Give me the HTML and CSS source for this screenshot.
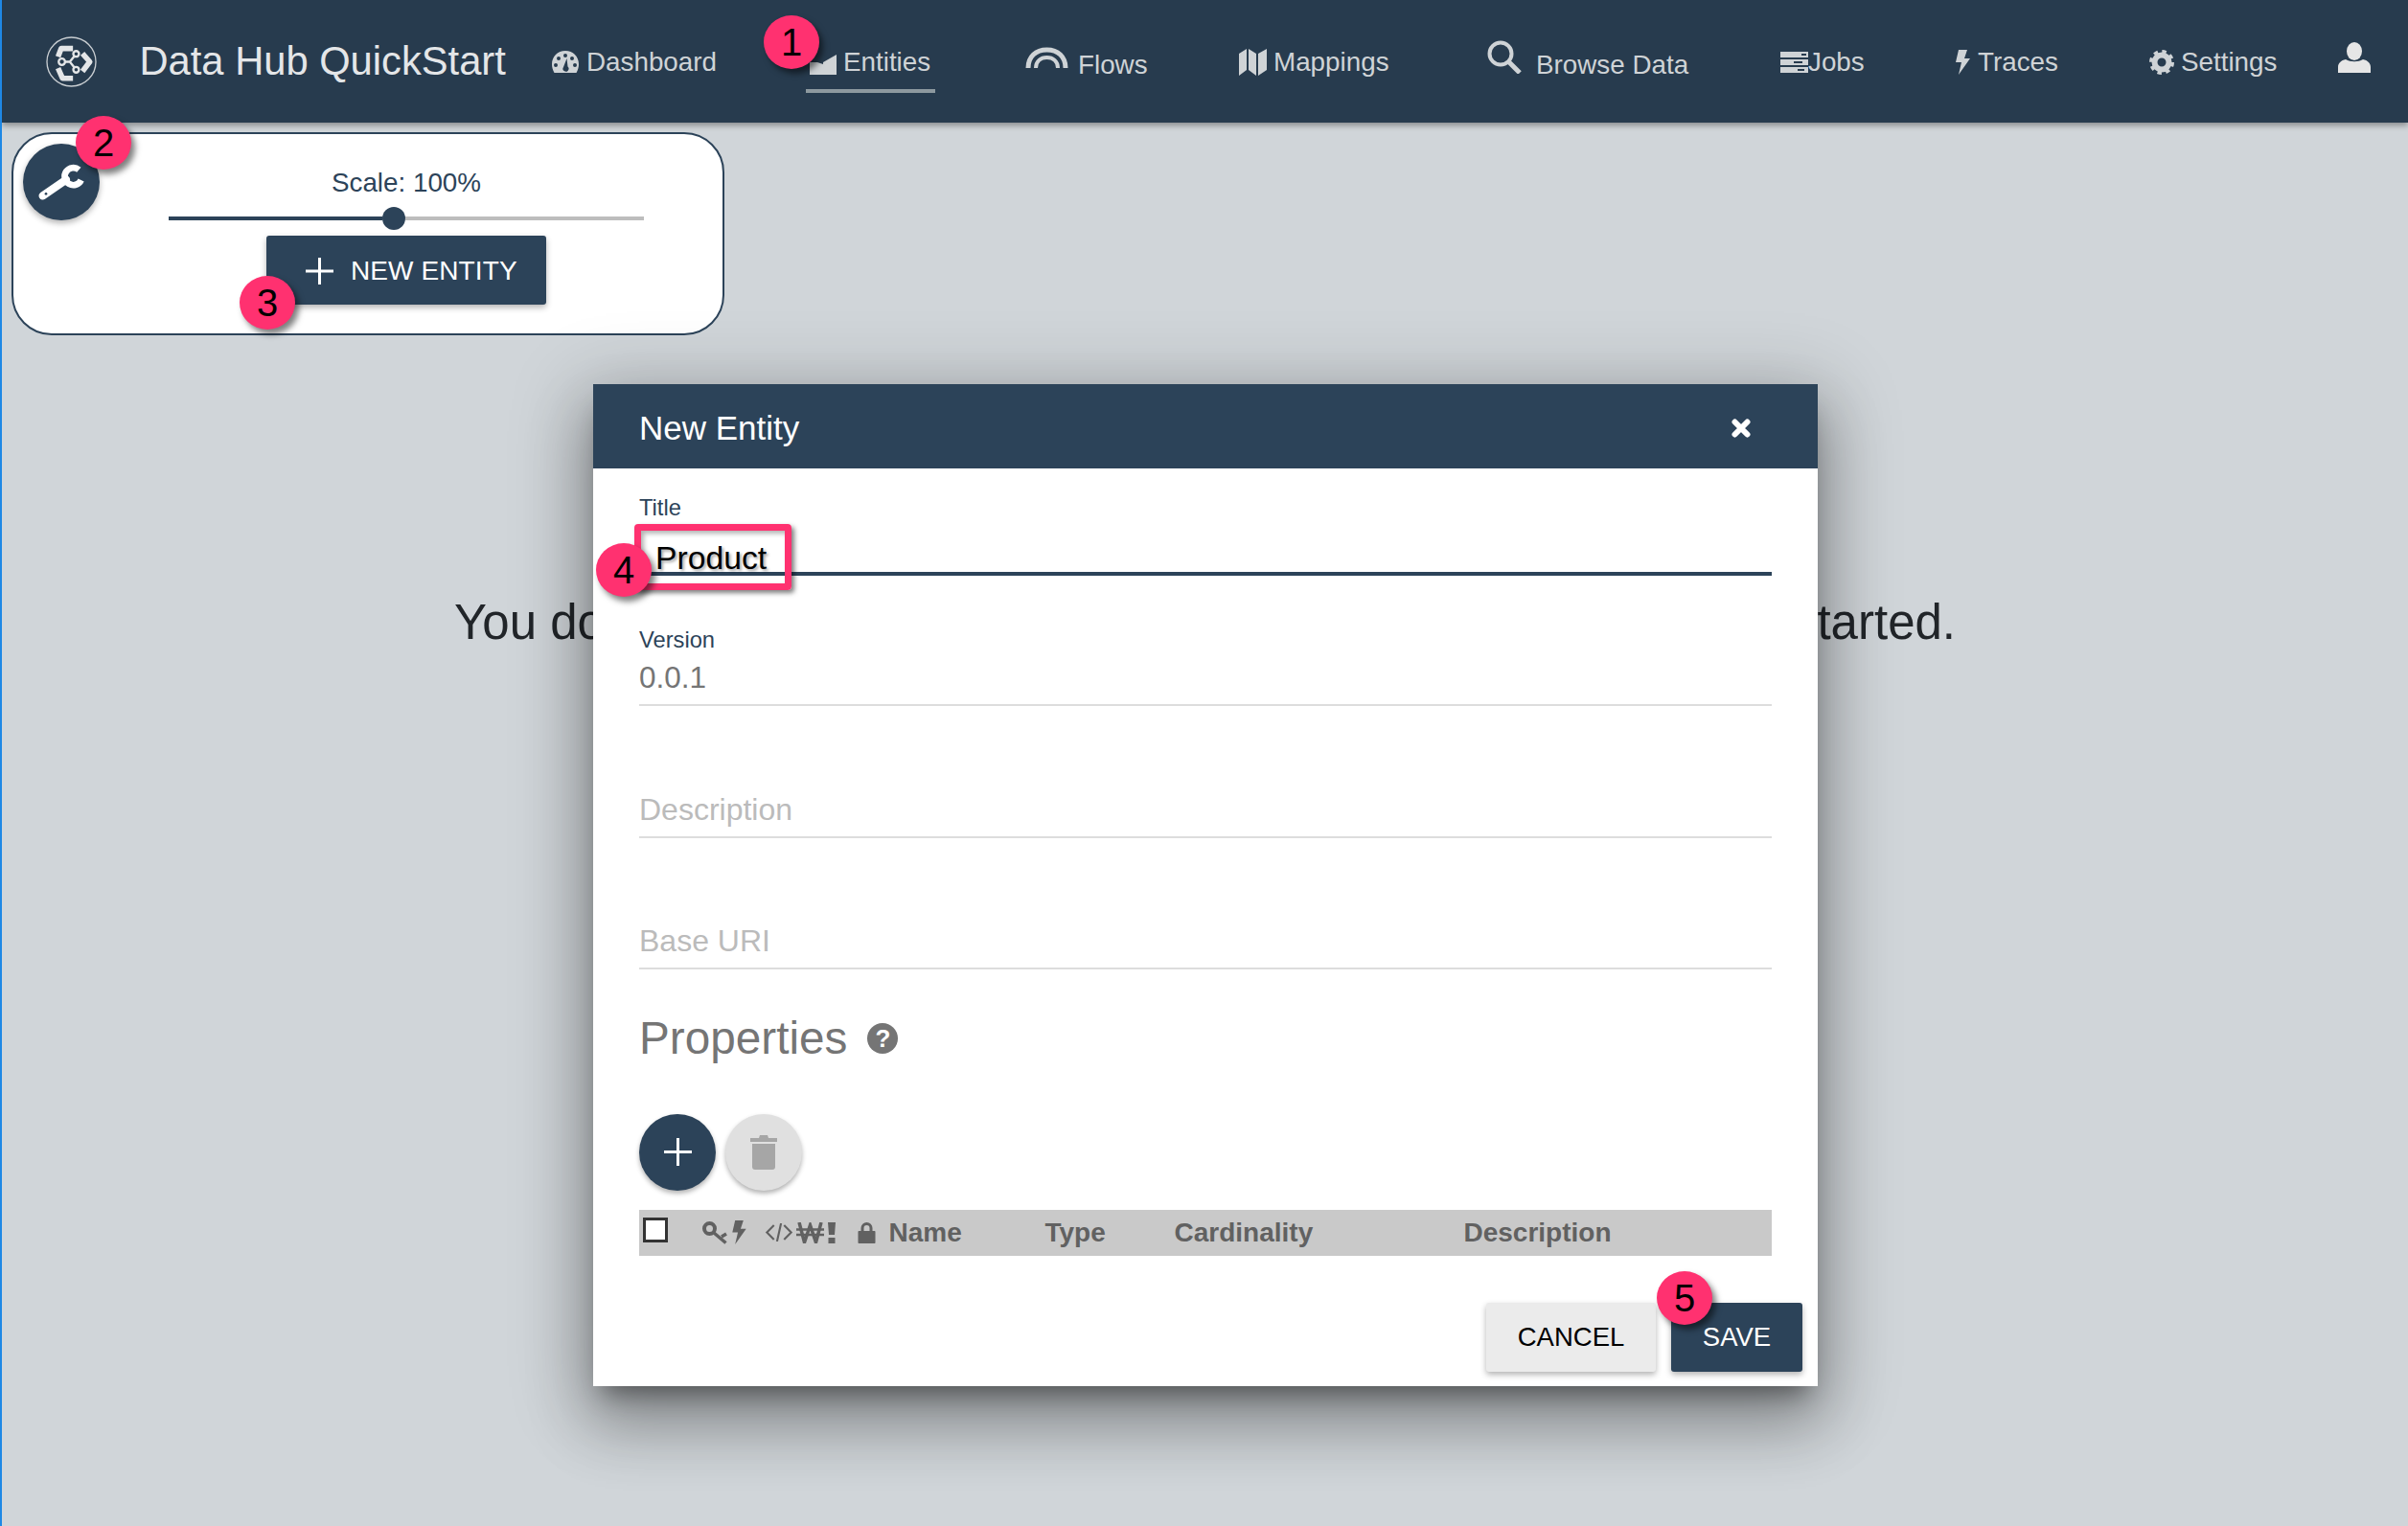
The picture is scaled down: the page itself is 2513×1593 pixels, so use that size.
FILE: index.html
```html
<!DOCTYPE html>
<html lang="en">
<head>
<meta charset="utf-8">
<title>Data Hub QuickStart</title>
<link rel="stylesheet" href="styles.css">
</head>
<body>
<header class="topbar">
  <svg class="logo" viewBox="50 20 160 160" aria-hidden="true">
    <circle cx="130" cy="100" r="77" fill="none" stroke="#c9ced2" stroke-width="4"/>
    <g fill="none" stroke="#e4e6e8" stroke-width="17" stroke-linejoin="round">
      <path d="M135 58H98L88 84"/>
      <path d="M88 120L102 152H135"/>
      <path d="M165 74L188 100L165 130"/>
    </g>
    <g fill="none" stroke="#e4e6e8" stroke-width="7">
      <path d="M100 100H125L145 75M125 100L145 125"/>
      <circle cx="145" cy="75" r="9" fill="#273b4e"/>
      <circle cx="100" cy="100" r="10" fill="#273b4e"/>
      <circle cx="145" cy="125" r="9" fill="#273b4e"/>
    </g>
  </svg>
  <div class="brand">Data Hub QuickStart</div>
  <nav class="nav">
    <a class="nav-item">
      <svg class="nav-icon" width="28" height="23" viewBox="0 0 28 23"><path fill-rule="evenodd" fill="#cfd3d6" d="M14 0C6 0 0 6 0 14c0 3 .8 6 2.500 9h23c1.700-3 2.500-6 2.500-9C28 6 22 0 14 0ZM14 3a2 2 0 1 1 0 4 2 2 0 0 1 0-4ZM7 6a2 2 0 1 1 0 4 2 2 0 0 1 0-4ZM21 6a2 2 0 1 1 0 4 2 2 0 0 1 0-4ZM4 13a2 2 0 1 1 0 4 2 2 0 0 1 0-4ZM24 13a2 2 0 1 1 0 4 2 2 0 0 1 0-4ZM15.500 8l1 8.500a3 3 0 1 1-4.500.5Z"/></svg>
      <span>Dashboard</span>
    </a>
    <a class="nav-item nav-active nav-entities">
      <svg class="nav-icon icon-entities" width="28" height="21" viewBox="0 0 28 21"><path fill="#cfd3d6" d="M0 21V8h8l6 2V8L28 0v21Z"/></svg>
      <span>Entities</span>
    </a>
    <a class="nav-item nav-flows">
      <svg class="nav-icon icon-raised" width="45" height="22" viewBox="0 0 45 22"><g fill="none" stroke="#cfd3d6"><path stroke-width="5" d="M3 22C3 10 11 3 22.500 3S42 10 42 22"/><path stroke-width="4" d="M11 22c0-7 5-11 11.500-11S34 15 34 22"/></g></svg>
      <span class="text-low">Flows</span>
    </a>
    <a class="nav-item nav-mappings">
      <svg class="nav-icon" width="29" height="28" viewBox="0 0 29 28"><path fill="#cfd3d6" d="M0 5 8 0v22l-8 6ZM10 0l8 5v23l-8-6ZM20 5l9-5v22l-9 6Z"/></svg>
      <span>Mappings</span>
    </a>
    <a class="nav-item nav-browse">
      <svg class="nav-icon icon-raised" width="36" height="35" viewBox="0 0 36 35"><g fill="none" stroke="#cfd3d6"><circle cx="14" cy="14" r="11.500" stroke-width="4"/><path stroke-width="5" d="M22 22l12 12"/></g></svg>
      <span class="text-low">Browse Data</span>
    </a>
    <a class="nav-item nav-jobs">
      <svg class="nav-icon" width="29" height="22" viewBox="0 0 29 22"><path fill="#cfd3d6" d="M0 0h29v6H0ZM0 8h29v6H0ZM0 16h29v6H0Z"/><path fill="#273b4e" d="M22 2h5v2h-5ZM14 10h9v2h-9ZM18 18h7v2h-7Z"/></svg>
      <span>Jobs</span>
    </a>
    <a class="nav-item">
      <svg class="nav-icon" width="15" height="26" viewBox="0 0 15 26"><path fill="#cfd3d6" d="M3 0h9L9 9h6L3 26l3-13H0Z"/></svg>
      <span>Traces</span>
    </a>
    <a class="nav-item nav-settings">
      <svg class="nav-icon" width="26" height="26" viewBox="0 0 26 26"><g fill="none" stroke="#cfd3d6"><circle cx="13" cy="13" r="7.500" stroke-width="6"/><circle cx="13" cy="13" r="11" stroke-width="4" stroke-dasharray="4.300 4.340"/></g></svg>
      <span>Settings</span>
    </a>
    <a class="nav-item nav-user">
      <svg width="34" height="32" viewBox="0 0 34 32"><ellipse cx="17" cy="9.500" rx="8" ry="9.500" fill="#e6e6e6"/><path fill="#e6e6e6" d="M0 32v-6c0-4 3-7 8-8 5 3 13 3 18 0 5 1 8 4 8 8v6Z"/></svg>
    </a>
  </nav>
</header>

<main class="content">
  <section class="toolbar">
    <button class="fab-tool" type="button">
      <svg width="80" height="80" viewBox="10 15 240 240"><g fill="none" stroke="#fff"><path stroke-width="25" stroke-linecap="round" d="M72 178 145 128"/><path stroke-width="20" d="M185 97A27 27 0 1 0 192 129"/></g><circle cx="82" cy="172" r="4" fill="#2c4359"/></svg>
    </button>
    <div class="toolbar-center">
      <div class="scale-label">Scale: 100%</div>
      <div class="slider">
        <span class="slider-fill"></span>
        <span class="slider-thumb"></span>
        <span class="slider-rest"></span>
      </div>
      <button class="new-entity" type="button">
        <svg width="29" height="28" viewBox="0 0 29 28"><path fill="#fff" d="M13 0h3v12.500h13v3H16V28h-3V15.500H0v-3h13Z"/></svg>
        <span>NEW ENTITY</span>
      </button>
    </div>
  </section>
  <p class="empty-message">You don't have any entities yet. Click New Entity button to get started.</p>
</main>

<div class="modal">
  <div class="modal-header">
    <h2 class="modal-title">New Entity</h2>
    <svg width="20" height="20" viewBox="0 0 20 20"><path fill="none" stroke="#fff" stroke-width="6" stroke-linecap="round" d="M3.500 3.500l13 13M16.500 3.500l-13 13"/></svg>
  </div>
  <div class="modal-body">
    <div class="field-label field-label-first">Title</div>
    <div class="title-input">
      <span class="title-value">Product</span>
      <span class="callout-box"></span>
    </div>
    <div class="field-label field-label-version">Version</div>
    <div class="text-field text-value">0.0.1</div>
    <div class="text-field text-placeholder field-spaced">Description</div>
    <div class="text-field text-placeholder field-spaced">Base URI</div>
    <div class="properties-head">
      <span>Properties</span>
      <span class="help-icon">?</span>
    </div>
    <div class="prop-actions">
      <button class="round-btn round-add" type="button">
        <svg width="29" height="29" viewBox="0 0 29 29"><path fill="#fff" d="M13 0h3v13h13v3H16v13h-3V16H0v-3h13Z"/></svg>
      </button>
      <button class="round-btn round-delete" type="button">
        <svg width="28" height="36" viewBox="0 0 28 36"><path fill="#a6a6a6" d="M0 3h9l1-3h8l1 3h9v4H0ZM2 9h24v24c0 2-1 3-3 3H5c-2 0-3-1-3-3Z"/></svg>
      </button>
    </div>
    <div class="prop-table-head">
      <span class="check"></span>
      <svg width="27" height="24" viewBox="0 0 27 24"><g fill="none" stroke="#616161"><circle cx="7.500" cy="7.500" r="5.500" stroke-width="4"/><path stroke-width="3.500" d="M11.500 11.500l13 11M20 16l5-3"/></g></svg>
      <svg width="15" height="25" viewBox="0 0 15 26"><path fill="#616161" d="M3 0h9L9 9h6L3 26l3-13H0Z"/></svg>
      <svg width="30" height="19" viewBox="0 0 28 18"><path fill="none" stroke="#616161" stroke-width="2" d="M9 2 2 9l7 7M19 2l7 7-7 7M16 0l-4 18"/></svg>
      <svg width="29" height="22" viewBox="0 0 29 22"><path fill="none" stroke="#616161" stroke-width="3.500" d="M3 0l5.500 21L14.500 3l6 18L26 0"/><path fill="none" stroke="#616161" stroke-width="2.500" d="M0 7.500h29M0 13h29"/></svg>
      <svg width="8" height="22" viewBox="0 0 8 22"><path fill="#616161" d="M0 0h8l-1 13H1ZM.5 16h7v6h-7Z"/></svg>
      <svg width="19" height="23" viewBox="0 0 18 23"><path fill="#616161" d="M1 10h2V7a6 6 0 0 1 12 0v3h2c.7 0 1 .4 1 1v11c0 .6-.3 1-1 1H1c-.6 0-1-.4-1-1V11c0-.6.4-1 1-1Zm5 0h6V7a3 3 0 0 0-6 0Z"/></svg>
      <span class="col-name">Name</span>
      <span class="col-name">Type</span>
      <span class="col-name">Cardinality</span>
      <span class="col-name">Description</span>
    </div>
    <div class="modal-actions">
      <button class="btn-cancel" type="button">CANCEL</button>
      <button class="btn-save" type="button">SAVE</button>
    </div>
  </div>
</div>

<span class="badge badge-1">1</span>
<span class="badge badge-2">2</span>
<span class="badge badge-3">3</span>
<span class="badge badge-4">4</span>
<span class="badge badge-5">5</span>
</body>
</html>
```

FILE: styles.css
```css
* {
  box-sizing: border-box;
}

html,
body {
  margin: 0;
  height: 1593px;
  overflow: hidden;
}

body {
  position: relative;
  border-left: 2px solid #1e88e5;
  background: #d0d5d9;
  font-family: "Liberation Sans", Arial, sans-serif;
  color: #212529;
}

button {
  font-family: inherit;
  border: 0;
  padding: 0;
}

/* top bar */
.topbar {
  display: flex;
  align-items: center;
  height: 128px;
  padding-left: 46px;
  background: #273b4e;
  box-shadow: 0 3px 6px rgba(0, 0, 0, 0.35);
}

.logo {
  width: 53px;
  height: 53px;
  flex: none;
}

.brand {
  margin-left: 44.5px;
  font-size: 41.7px;
  color: #e4e6e8;
  white-space: nowrap;
}

.nav {
  position: absolute;
  left: 574px;
  top: 0;
  display: grid;
  grid-template-columns: 265px 229px 223px 259px 306px 183px 202px 197px 40px;
  height: 128px;
  align-items: center;
  padding-top: 1px;
}

.nav-item {
  position: relative;
  display: flex;
  align-items: center;
  gap: 8px;
  font-size: 27.8px;
  color: #cfd3d6;
  white-space: nowrap;
}

.nav-entities {
  padding-left: 4px;
  gap: 7px;
}

.icon-entities {
  margin-top: 6px;
}

.nav-active::after {
  content: "";
  position: absolute;
  left: 0;
  top: 44px;
  width: 135px;
  height: 4px;
  background: #8d999f;
}

.nav-flows {
  gap: 10px;
}

.nav-mappings {
  gap: 7px;
}

.nav-browse {
  gap: 15px;
}

.nav-settings {
  gap: 7px;
}

.icon-raised {
  margin-bottom: 10px;
}

.text-low {
  padding-top: 7px;
}

.nav-jobs {
  gap: 0;
}

.nav-user {
  margin-bottom: 10px;
}

/* page content */
.content {
  padding: 10px 0 0 10px;
}

.toolbar {
  display: flex;
  width: 744px;
  height: 212px;
  padding: 10px 0 0 10px;
  background: #fff;
  border: 2px solid #2c4359;
  border-radius: 42px;
}

.fab-tool {
  flex: none;
  width: 80px;
  height: 80px;
  border-radius: 50%;
  background: #2c4359;
  box-shadow: 0 3px 6px rgba(0, 0, 0, 0.3);
}

.fab-tool svg {
  display: block;
}

.toolbar-center {
  display: flex;
  flex-direction: column;
  align-items: center;
  width: 496px;
  margin-left: 72px;
  padding-top: 25px;
}

.scale-label {
  font-size: 27.8px;
  line-height: 32px;
  color: #2c4359;
}

.slider {
  display: flex;
  align-items: center;
  width: 100%;
  height: 24px;
  margin-top: 9px;
}

.slider-fill {
  width: 223px;
  height: 4px;
  background: #2c4359;
}

.slider-thumb {
  width: 24px;
  height: 24px;
  border-radius: 50%;
  background: #2c4359;
}

.slider-rest {
  flex: 1;
  height: 4px;
  background: #bdbdbd;
}

.new-entity {
  display: flex;
  align-items: center;
  gap: 18px;
  width: 292px;
  height: 72px;
  margin-top: 6px;
  padding: 2px 0 0 41px;
  background: #2c4359;
  border-radius: 3px;
  color: #fff;
  font-size: 28px;
  letter-spacing: 0.1px;
  box-shadow: 0 3px 6px rgba(0, 0, 0, 0.3);
}

.empty-message {
  margin: 270px 0 0;
  padding-right: 10px;
  font-size: 51px;
  line-height: 60px;
  text-align: center;
  white-space: nowrap;
}

/* dialog */
.modal {
  position: absolute;
  left: 617px;
  top: 401px;
  width: 1278px;
  height: 1046px;
  background: #fff;
  box-shadow: 0 18px 24px -11px rgba(0, 0, 0, 0.4), 0 38px 61px 5px rgba(0, 0, 0, 0.24), 0 14px 74px 13px rgba(0, 0, 0, 0.2);
}

.modal-header {
  display: flex;
  align-items: center;
  justify-content: space-between;
  height: 88px;
  padding: 3px 70px 0 48px;
  background: #2c4359;
}

.modal-title {
  margin: 0;
  font-size: 35px;
  font-weight: 400;
  color: #fff;
}

.modal-body {
  padding: 27px 48px 0;
}

.field-label {
  font-size: 23.7px;
  line-height: 28px;
  color: #2c4359;
}

.field-label-version {
  margin-top: 53px;
}

.title-input {
  position: relative;
  height: 57px;
  padding: 19px 0 0 17px;
  border-bottom: 4px solid #2c4359;
}

.title-value {
  display: block;
  font-size: 33.7px;
  line-height: 38px;
  color: #000;
  text-shadow: 2px 2px 3px rgba(0, 0, 0, 0.35);
}

.callout-box {
  position: absolute;
  left: -5px;
  top: 3px;
  width: 164px;
  height: 69px;
  border: 7px solid #ff3170;
  border-radius: 4px;
  box-shadow: 3px 3px 5px rgba(0, 0, 0, 0.5), inset 3px 3px 5px rgba(0, 0, 0, 0.3);
}

.text-field {
  height: 49px;
  margin-top: 6px;
  padding-bottom: 7px;
  border-bottom: 2px solid #ddd;
  font-size: 32px;
  line-height: 38px;
}

.field-spaced {
  margin-top: 88.5px;
}

.text-value {
  font-size: 31.5px;
  color: #757575;
}

.text-placeholder {
  color: #bbb;
}

.properties-head {
  display: flex;
  align-items: center;
  gap: 21px;
  margin-top: 43.5px;
  font-size: 47.7px;
  line-height: 56px;
  color: #757575;
}

.help-icon {
  width: 32px;
  height: 32px;
  border-radius: 50%;
  background: #757575;
  color: #fff;
  font-size: 26px;
  font-weight: 700;
  line-height: 32px;
  text-align: center;
}

.prop-actions {
  display: flex;
  gap: 10px;
  margin-top: 51px;
}

.round-btn {
  display: flex;
  align-items: center;
  justify-content: center;
  width: 80px;
  height: 80px;
  border-radius: 50%;
  box-shadow: 0 3px 5px rgba(0, 0, 0, 0.3);
}

.round-add {
  background: #2c4359;
}

.round-delete {
  background: #e0e0e0;
}

.prop-table-head {
  display: grid;
  grid-template-columns: 62px 31px 34px 33px 33px 31px 32.5px 163px 135px 302px 1fr;
  align-items: center;
  height: 48px;
  margin-top: 20px;
  padding-left: 4px;
  background: #c9c9c9;
  color: #616161;
}

.check {
  width: 26px;
  height: 26px;
  margin-top: -6px;
  background: #fff;
  border: 3px solid #333;
}

.col-name {
  font-size: 28px;
  font-weight: 700;
}

.modal-actions {
  display: flex;
  justify-content: flex-end;
  gap: 16px;
  margin: 49px -32px 0 0;
}

.btn-cancel,
.btn-save {
  height: 72px;
  border-radius: 3px;
  font-size: 27.5px;
  box-shadow: 0 3px 6px rgba(0, 0, 0, 0.3);
}

.btn-cancel {
  width: 177px;
  background: #ebebeb;
  color: #000;
}

.btn-save {
  width: 137px;
  background: #2c4359;
  color: #fff;
}

/* numbered annotations */
.badge {
  position: absolute;
  width: 58px;
  height: 56px;
  border-radius: 50%;
  background: #ff3170;
  color: #000;
  font-size: 40px;
  line-height: 56px;
  text-align: center;
  box-shadow: 4px 5px 6px rgba(0, 0, 0, 0.5);
}

.badge-1 {
  left: 795px;
  top: 16px;
}

.badge-2 {
  left: 77px;
  top: 121px;
}

.badge-3 {
  left: 248px;
  top: 288px;
}

.badge-4 {
  left: 620px;
  top: 567px;
}

.badge-5 {
  left: 1727px;
  top: 1327px;
}
```
